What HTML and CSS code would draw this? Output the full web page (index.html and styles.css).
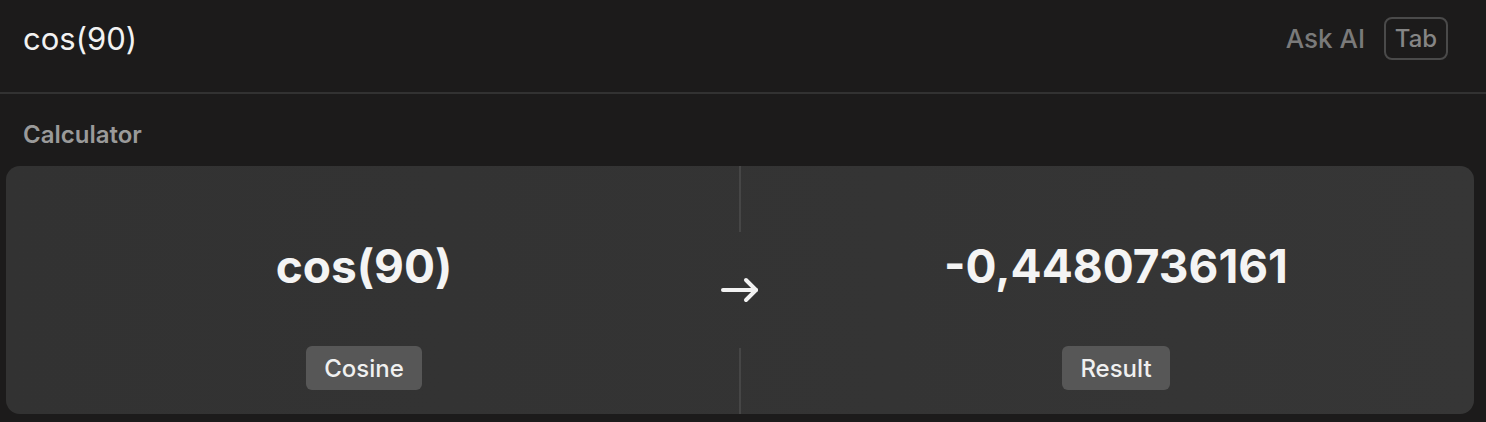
FILE: index.html
```html
<!DOCTYPE html>
<html>
<head>
<meta charset="utf-8">
<link rel="stylesheet" href="styles.css">
</head>
<body>
<div class="app">
  <header class="search-bar">
    <div class="query">cos(90)</div>
    <div class="actions">
      <span class="ask-ai">Ask AI</span>
      <span class="key">Tab</span>
    </div>
  </header>
  <div class="section-title">Calculator</div>
  <div class="card">
    <div class="pane">
      <div class="value">cos(90)</div>
      <div class="pill">Cosine</div>
    </div>
    <div class="middle">
      <div class="vline"></div>
      <div class="arrow-box">
        <svg width="40" height="28" viewBox="0 0 40 28" fill="none" stroke="#f2f2f2" stroke-width="4" stroke-linecap="round" stroke-linejoin="round">
          <path d="M3 14 H36"/>
          <path d="M26 4 L36 14 L26 24"/>
        </svg>
      </div>
      <div class="vline"></div>
    </div>
    <div class="pane">
      <div class="value">-0,4480736161</div>
      <div class="pill">Result</div>
    </div>
  </div>
</div>
</body>
</html>
```
FILE: styles.css
```css
html, body {
  margin: 0;
  padding: 0;
  background: #1c1b1b;
}
body {
  font-family: Inter, "Noto Sans", sans-serif;
  width: 1486px;
  height: 422px;
  overflow: hidden;
}
.app {
  display: flex;
  flex-direction: column;
}
.search-bar {
  height: 76px;
  padding: 0 38px 16px 23px;
  border-bottom: 2px solid #323232;
  display: flex;
  align-items: center;
  justify-content: space-between;
}
.query {
  color: #f2f2f2;
  font-size: 31px;
  font-weight: 400;
}
.actions {
  display: flex;
  align-items: center;
  gap: 19px;
}
.ask-ai {
  color: #7a7a7a;
  font-size: 26px;
  font-weight: 500;
}
.key {
  box-sizing: border-box;
  height: 43px;
  width: 64px;
  border: 2px solid #4a4a4a;
  border-radius: 8px;
  color: #858585;
  font-size: 24px;
  font-weight: 500;
  display: flex;
  align-items: center;
  justify-content: center;
}
.section-title {
  color: #9a9a9a;
  font-size: 24px;
  font-weight: 600;
  padding: 27px 0 0 23px;
  height: 45px;
  line-height: 28px;
}
.card {
  margin: 0 12px 0 6px;
  height: 248px;
  border-radius: 14px;
  background: linear-gradient(90deg, #323232 0%, #343434 60%, #363636 100%);
  display: grid;
  grid-template-columns: 1fr 36px 1fr;
}
.pane {
  display: flex;
  flex-direction: column;
  align-items: center;
  padding-top: 72px;
}
.value {
  color: #f4f4f4;
  font-size: 46px;
  font-weight: 700;
  line-height: 56px;
}
.pill {
  margin-top: 52px;
  height: 44px;
  padding: 0 18px;
  border-radius: 6px;
  background: #575757;
  color: #f0f0f0;
  font-size: 24px;
  font-weight: 500;
  display: flex;
  align-items: center;
}
.middle {
  display: flex;
  flex-direction: column;
  align-items: center;
}
.vline {
  flex: 1;
  width: 2px;
  background: #464646;
}
.arrow-box {
  height: 116px;
  display: flex;
  align-items: center;
  justify-content: center;
}
```
